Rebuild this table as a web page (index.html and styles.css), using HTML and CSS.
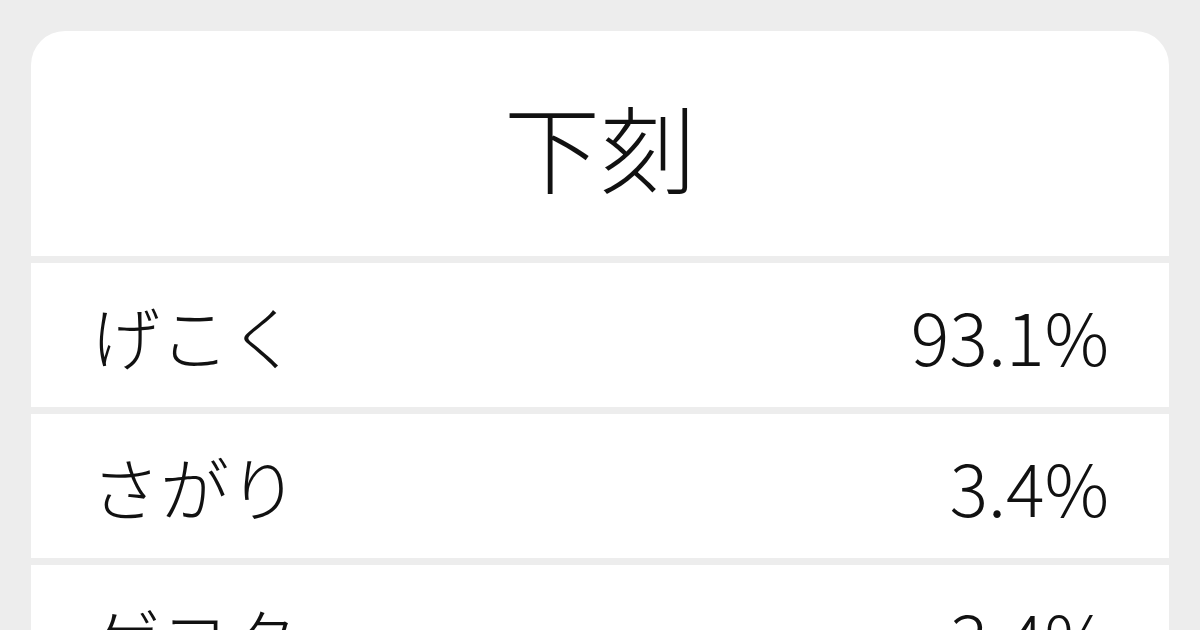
FILE: index.html
```html
<!DOCTYPE html>
<html lang="ja">
<head>
<meta charset="utf-8">
<link rel="stylesheet" href="styles.css">
</head>
<body>
<div class="page">
  <div class="card">
    <div class="title-box"><h1 class="title">下刻</h1></div>
    <div class="row"><span class="reading">げこく</span><span class="pct">93.1%</span></div>
    <div class="row"><span class="reading">さがり</span><span class="pct">3.4%</span></div>
    <div class="row"><span class="reading">ゲコク</span><span class="pct">3.4%</span></div>
  </div>
</div>
</body>
</html>
```
FILE: styles.css
```css
html, body {
  margin: 0;
  padding: 0;
  width: 1200px;
  height: 630px;
  overflow: hidden;
  background: #ededed;
}
.page {
  padding: 31px 31px 0 31px;
  font-family: "Noto Sans CJK JP", "Noto Sans", sans-serif;
  font-weight: 300;
  color: #111;
}
.card {
  display: flex;
  flex-direction: column;
  gap: 7px;
  border-radius: 34px 34px 0 0;
  overflow: hidden;
}
.title-box {
  background: #fff;
  height: 225px;
  display: flex;
  align-items: center;
  justify-content: center;
}
.title {
  margin: 2px 0 0 0;
  font-size: 96px;
  font-weight: 300;
  line-height: 1;
}
.row {
  background: #fff;
  height: 144px;
  display: flex;
  align-items: center;
  justify-content: space-between;
  padding: 0 60px 0 60px;
  font-size: 69px;
  line-height: 1;
  flex-shrink: 0;
}
.pct {
  font-size: 72px;
}
```
